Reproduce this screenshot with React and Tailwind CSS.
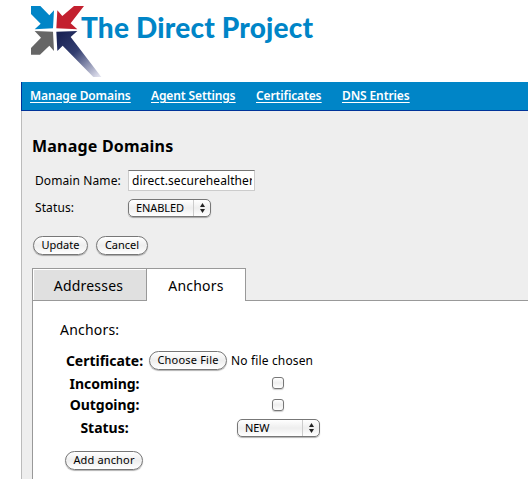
import React from 'react'

const pill =
  'box-border flex h-[19px] items-center justify-center rounded-full border border-[#777] bg-linear-to-b from-white via-[#eeeeee] to-white pb-[2px] text-[11px] leading-none whitespace-nowrap shadow-[0_1px_1px_rgba(0,0,0,0.3)]'

function Logo() {
  return (
    <svg className="block h-[71px] w-[72px] shrink-0" viewBox="30 18 216 213">
      <defs>
        <linearGradient id="tail" gradientUnits="userSpaceOnUse" x1="120" y1="105" x2="238" y2="232">
          <stop offset="0" stopColor="#1a2456" />
          <stop offset="0.4" stopColor="#333e70" />
          <stop offset="1" stopColor="#e4e4f0" />
        </linearGradient>
      </defs>
      <path fill="#0085c7" d="M33 18H61L88 46L102 31L99 85L44 88L62 71L33 42Z" />
      <path fill="#c3202f" d="M192 18H162L127 48L112 31L109 85L172 88L152 70Z" />
      <path fill="#666" d="M33 164H60L88 137L102 153L99 95L44 93L63 113L33 144Z" />
      <path fill="url(#tail)" d="M109 95L172 93L152 111L244 231H220L128 137L112 153Z" />
    </svg>
  )
}

function Select({ value }) {
  return (
    <button className="flex h-[18px] w-[83px] items-stretch rounded-[5px] border border-[#777] bg-linear-to-b from-white via-[#eeeeee] to-white text-[11px] shadow-[0_1px_1px_rgba(0,0,0,0.3)]">
      <span className="flex flex-1 items-center pb-px pl-[7px] leading-none tracking-[-0.1px]">{value}</span>
      <span className="flex w-[17px] items-center justify-center border-l border-[#ccc]">
        <svg className="h-[10px] w-[5px]" viewBox="0 0 5 10">
          <path d="M2.5 0L5 4H0ZM2.5 10L5 6H0Z" fill="#222" />
        </svg>
      </span>
    </button>
  )
}

function Check() {
  return (
    <span
      role="checkbox"
      aria-checked="false"
      className="mr-[2px] mb-px block size-[12px] rounded-[3px] border border-[#777] bg-linear-to-b from-white via-[#eeeeee] to-white shadow-[0_1px_1px_rgba(0,0,0,0.2)]"
    />
  )
}

function Field({ label, children, className }) {
  return (
    <div className={`grid grid-cols-[79px_259px] items-center gap-x-[5px] ${className}`}>
      <span className="flex justify-center text-[14px] leading-none font-bold tracking-[-0.02px] whitespace-nowrap">
        {label}
      </span>
      <div className="flex items-center justify-center">{children}</div>
    </div>
  )
}

export default function App() {
  return (
    <div className="flex h-[479px] w-[528px] flex-col overflow-hidden bg-white pl-[21px] font-['Noto_Sans',sans-serif] text-black">
      <header className="flex h-[82px] shrink-0 items-start pt-[6px] pl-[9px]">
        <Logo />
        <h1 className="-ml-[21px] pt-[4px] font-['Lato',sans-serif] text-[28px] leading-[34px] font-black tracking-[0.2px] whitespace-nowrap text-[#0085c7]">
          The Direct Project
        </h1>
      </header>
      <nav className="flex h-[29px] shrink-0 border-b border-l border-[#003399] bg-[#0085c7] pl-[8px] text-[12px] leading-[28px] font-semibold tracking-[-0.12px] whitespace-nowrap text-white underline underline-offset-2">
        <a className="w-[121px]">Manage Domains</a>
        <a className="w-[105px]">Agent Settings</a>
        <a className="w-[86px]">Certificates</a>
        <a>DNS Entries</a>
      </nav>
      <main className="flex flex-1 flex-col border-l border-[#bbb] bg-[#eee] pl-[10px]">
        <h2 className="mt-[24px] h-[22px] text-[16px] leading-[22px] font-bold tracking-[0.2px]">Manage Domains</h2>
        <div className="mt-[13px] flex h-[21px] items-center pl-[3px] text-[12px]">
          <label className="w-[93px] tracking-[0.1px] whitespace-nowrap">Domain Name:</label>
          <div className="h-[21px] w-[127px] overflow-hidden border border-[#ccc] border-t-[#777] bg-white pt-px pr-[2px] pl-[3px]">
            <div className="overflow-hidden text-[12px] leading-[18px] tracking-[0.1px] whitespace-nowrap">
              direct.securehealther
            </div>
          </div>
        </div>
        <div className="mt-[8px] flex h-[18px] items-center pl-[3px] text-[12px]">
          <label className="w-[93px] tracking-[0.1px]">Status:</label>
          <Select value="ENABLED" />
        </div>
        <div className="mt-[19px] flex gap-[8px] pl-[1px]">
          <button className={`${pill} w-[55px]`}>Update</button>
          <button className={`${pill} w-[52px]`}>Cancel</button>
        </div>
        <div className="mt-[13px] flex h-[33px] shrink-0 text-[14px] leading-[34px] tracking-[0.2px]">
          <div className="w-[114px] border-t border-b border-l border-[#999] bg-[#e0e0e0] pr-[2px] text-center shadow-[inset_1px_1px_0_#fff]">
            Addresses
          </div>
          <div className="w-[100px] border-t border-r border-l border-[#999] bg-white text-center">
            Anchors
          </div>
          <div className="flex-1 border-b border-[#999]" />
        </div>
        <section className="flex flex-1 flex-col border-l border-[#999] bg-white">
          <p className="mt-[20px] pl-[27px] text-[14px] leading-[18px] tracking-[0.2px]">Anchors:</p>
          <div className="mt-[11px] pl-[32px]">
            <Field label="Certificate:" className="h-[21px]">
              <div className="flex w-full items-center gap-[4px]">
                <button className={`${pill} w-[78px] tracking-[0.2px]`}>Choose File</button>
                <span className="text-[12px] leading-none tracking-[0.15px]">No file chosen</span>
              </div>
            </Field>
            <Field label="Incoming:" className="h-[25px]">
              <Check />
            </Field>
            <Field label="Outgoing:" className="h-[18px]">
              <Check />
            </Field>
            <Field label="Status:" className="h-[28px]">
              <Select value="NEW" />
            </Field>
          </div>
          <button className={`${pill} mt-[9px] ml-[32px] w-[78px] tracking-[0.15px]`}>Add anchor</button>
        </section>
      </main>
    </div>
  )
}
